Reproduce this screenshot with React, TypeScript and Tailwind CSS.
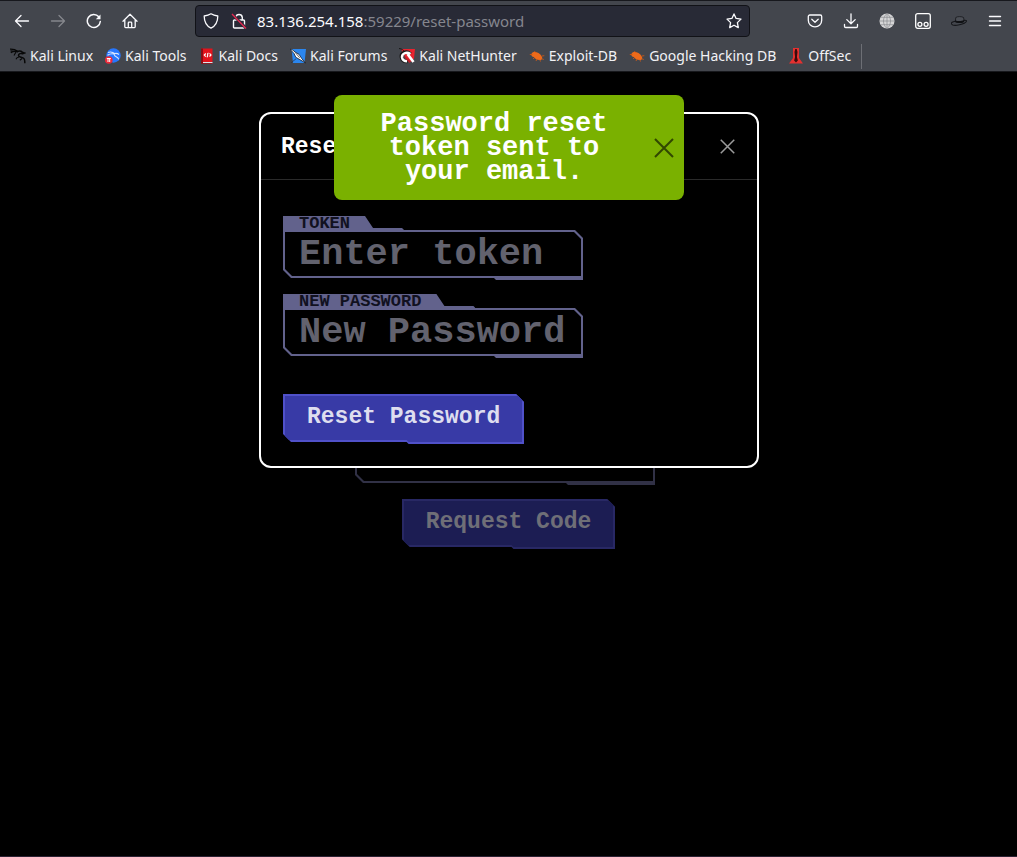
import type { ReactNode } from "react";

const Stroke = ({ children, size = 16, width = 1.3 }: { children: ReactNode; size?: number; width?: number }) => (
  <svg width={size} height={size} viewBox="0 0 16 16" fill="none" stroke="currentColor" strokeWidth={width} strokeLinecap="round" strokeLinejoin="round" aria-hidden="true">
    {children}
  </svg>
);

const ToolButton = ({ label, dim, children }: { label: string; dim?: boolean; children: ReactNode }) => (
  <button type="button" aria-label={label} className={`flex h-8 w-9 shrink-0 items-center justify-center ${dim ? "text-[#85878c]" : "text-[#fbfbfe]"}`}>
    {children}
  </button>
);

const Bug = () => (
  <svg width="16" height="16" viewBox="0 0 16 16" aria-hidden="true">
    <path d="M2.500 6C3 3.800 5.600 3.600 7.500 4.300c2.800.8 5 2.700 5.700 5.200.3 1.600-1 2.700-2.700 2.600-2.600-.2-4.800-1.400-5.700-3.100C3 8.800 2 7.800 2.500 6Z" fill="#ee6a1a" />
    <path d="M.8 6.500h3M4 11l2-2M7 13l1-2M5.500 3l1 2M13 8l2.300-.3M14.800 11.500l-2.300-.8M11.500 13.500l-.7-2" stroke="#d95c12" strokeWidth=".8" />
  </svg>
);

const bookmarks: { name: string; icon: ReactNode }[] = [
  {
    name: "Kali Linux",
    icon: (
      <svg width="16" height="16" viewBox="0 0 16 16" fill="none" stroke="#080808" aria-hidden="true">
        <path d="M0 1.200c3.500-.2 5.500.5 8 2.300M.8 4.800C3 3.200 5 3 8 3.800M.5 2.800 6 3.500" strokeWidth="1.200" />
        <path d="M7 3.500c2-.6 4.300-.4 5.300.6l2.400.9-2 .7c-2-.6-4.200-.1-4.200 1.700 0 2.200 4 1.300 5.500 3.200.9 1.200.9 2.900.8 4.600" strokeWidth="1.500" />
        <path d="M6 4 4 7.500M9 9c-1.500.2-2.500 1-3 2.200M12 10.500l-2.200 1.700" strokeWidth="1.100" />
      </svg>
    ),
  },
  {
    name: "Kali Tools",
    icon: (
      <svg width="16" height="16" viewBox="0 0 16 16" fill="none" aria-hidden="true">
        <circle cx="8.500" cy="7.500" r="7.200" fill="#2777ff" />
        <path d="M3 4.500c2.600-.9 5-.3 7 1.300M2.500 7.300c2.300-1.600 4.500-1.900 7-1.200M9 5.700c2-.7 3.500-.4 5 .8M9.500 6.300c-.8 2.700 3.500 2 4.200 5" stroke="#d9e7ff" strokeWidth="1.100" />
        <circle cx="3.800" cy="12" r="3.800" fill="#ed2939" />
        <path d="M1.800 10.500h4M3 10.500V14M4.700 10.500V14" stroke="#fff" strokeWidth="1" />
      </svg>
    ),
  },
  {
    name: "Kali Docs",
    icon: (
      <svg width="16" height="16" viewBox="0 0 16 16" fill="none" aria-hidden="true">
        <path d="M2 .5h11.500V14H2z" fill="#e3131c" />
        <path d="M2 .5h2V15H2z" fill="#8c0d14" />
        <path d="M4 14h9.500v1.300H4z" fill="#dfe3ea" />
        <path d="M2 15.200h11.500v.8H2z" fill="#8c0d14" />
        <path d="m6.800 5.500-1.500 1.600 1.500 1.600M10.500 5.300 12 6.900l-1.500 1.600M9.500 5C7.300 5.500 10 8.300 7.800 9.200" stroke="#fff" strokeWidth="1.200" />
      </svg>
    ),
  },
  {
    name: "Kali Forums",
    icon: (
      <svg width="16" height="16" viewBox="0 0 16 16" fill="none" aria-hidden="true">
        <path d="M1.500 1H16l-1.500 14H3z" fill="#2b86ee" />
        <path d="M0 1.200c2 .2 3.500 1.200 5 2.800l4 2.300 2.700 4.200L15.500 15l-5.300-3.200-4.400-2.500L4 5.500z" fill="#fff" stroke="#161b25" strokeWidth=".8" />
        <path d="m5.500 4.800 4.200 5M1 14.800l5-4" stroke="#26303f" strokeWidth=".7" />
      </svg>
    ),
  },
  {
    name: "Kali NetHunter",
    icon: (
      <svg width="16" height="16" viewBox="0 0 16 16" fill="none" aria-hidden="true">
        <path d="M2 1h14l-1 9.500L12 14 6 9z" fill="#e8232e" />
        <path d="M0 .5c2.500.2 4.500 1.500 6 3.500" stroke="#191919" strokeWidth="1" />
        <path d="M11.500 6C7 2 1.500 5 2.500 9.500c.6 2.800 3 4.200 6 4" stroke="#191919" strokeWidth="3.600" />
        <path d="M11.500 6C7.500 3.300 2.500 5.500 3 9.500c.5 2.600 2.500 3.700 5 3.700" stroke="#fff" strokeWidth="2.400" />
        <path d="m8.500 6 6 8" stroke="#fff" strokeWidth="2.600" />
        <path d="m6 9 5 5.500" stroke="#c51b25" strokeWidth="1.500" />
      </svg>
    ),
  },
  { name: "Exploit-DB", icon: <Bug /> },
  { name: "Google Hacking DB", icon: <Bug /> },
  {
    name: "OffSec",
    icon: (
      <svg width="16" height="16" viewBox="0 0 16 16" aria-hidden="true">
        <path d="M5 0h6v10l4 5.500H1L5 10z" fill="#e5302f" />
        <path d="M7.300 1h1.400l.8 3-.6 5 1 3.500-1.900 2-1.900-2 1-3.500-.6-5z" fill="#3a0b0c" />
      </svg>
    ),
  },
];

const BrowserBar = () => (
  <header className="border-t border-b border-t-[#17181d] border-b-[#17181c] bg-[#43464d] font-['Noto_Sans',sans-serif]">
    <div className="flex h-10 items-center px-1">
      <ToolButton label="Back">
        <Stroke><path d="M14.500 8H1.500M7 2.500 1.500 8 7 13.500" /></Stroke>
      </ToolButton>
      <ToolButton label="Forward" dim>
        <Stroke><path d="M1.500 8h13M9 2.500 14.500 8 9 13.500" /></Stroke>
      </ToolButton>
      <ToolButton label="Reload">
        <Stroke width={1.5}>
          <path d="M14.300 8.500A6.500 6.500 0 1 1 12.800 3.800" />
          <path d="M14.500 1.500v4.700H9.800z" fill="currentColor" stroke="none" />
        </Stroke>
      </ToolButton>
      <ToolButton label="Home">
        <Stroke>
          <path d="M1 8.200 8 1.300l7 6.900M2.800 7v6.800c0 .5.300.8.8.8h8.800c.5 0 .8-.3.8-.8V7M6.300 14.500V10c0-.5.300-.8.8-.8h1.800c.5 0 .8.3.8.800v4.500" />
        </Stroke>
      </ToolButton>

      <div className="mx-[47px] flex h-8 min-w-0 flex-1 items-center rounded border border-[#111217] bg-[#282a36] text-[#fbfbfe]">
        <span className="ml-[7px] shrink-0">
          <Stroke><path d="M8 .8c2 1.300 4.200 1.900 6.800 2.200 0 5.500-1.800 9.700-6.800 12.200C3 12.700 1.200 8.500 1.200 3 3.800 2.700 6 2.100 8 .8Z" /></Stroke>
        </span>
        <span className="ml-3 shrink-0">
          <svg width="16" height="16" viewBox="0 0 16 16" fill="none" strokeWidth="1.400" aria-hidden="true">
            <path d="M4.800 7V4.300a3.300 3.300 0 0 1 6.500 0V7M3.500 7h9c.6 0 1 .4 1 1v6c0 .6-.4 1-1 1h-9c-.6 0-1-.4-1-1V8c0-.6.4-1 1-1Z" stroke="#fbfbfe" />
            <path d="m1.500 1.500 13.500 13.500" stroke="#282a36" strokeWidth="3" />
            <path d="m1 1 14 14.500" stroke="#e22850" />
          </svg>
        </span>
        <p className="ml-2.5 min-w-0 flex-1 truncate text-[15px] leading-5 text-[#85868e]">
          <span className="text-[#fbfbfe]">83.136.254.158</span>:59229/reset-password
        </p>
        <button type="button" aria-label="Bookmark this page" className="mr-[7px] shrink-0">
          <Stroke>
            <path d="m8 .9 2.100 4.500 4.900.7-3.600 3.500.9 5-4.300-2.400-4.300 2.400.9-5L1 6.100l4.900-.7z" />
          </Stroke>
        </button>
      </div>

      <ToolButton label="Save to Pocket">
        <Stroke><path d="M2.800 2h10.400c.8 0 1.500.6 1.500 1.400v3.800c0 3.800-3 6.600-6.700 6.600S1.300 11 1.300 7.200V3.400C1.300 2.600 2 2 2.800 2ZM4.800 6.200 8 9.200l3.200-3" /></Stroke>
      </ToolButton>
      <ToolButton label="Downloads">
        <Stroke><path d="M8 .8v9.800M3.800 6.600 8 10.700l4.200-4.100M1.500 11.500v1.800c0 .7.500 1.200 1.200 1.200h10.600c.7 0 1.200-.5 1.200-1.200v-1.800" /></Stroke>
      </ToolButton>
      <ToolButton label="Proxy">
        <svg width="16" height="16" viewBox="0 0 16 16" fill="none" aria-hidden="true">
          <circle cx="8" cy="8" r="7.500" fill="#d5d5d6" />
          <path d="M8 .5v15M.5 8h15M1.800 4.300h12.400M1.800 11.700h12.400M8 .5C3.300 4.500 3.300 11.500 8 15.500M8 .5c4.700 4 4.700 11 0 15" stroke="#8b8d91" strokeWidth=".7" />
        </svg>
      </ToolButton>
      <ToolButton label="Containers">
        <svg width="16" height="16" viewBox="0 0 16 16" fill="none" stroke="#fff" strokeWidth="1.300" aria-hidden="true">
          <rect x=".7" y=".7" width="14.600" height="14.600" rx="2" />
          <circle cx="4.900" cy="11.300" r="2" />
          <circle cx="11.100" cy="11.300" r="2" />
        </svg>
      </ToolButton>
      <ToolButton label="Hat">
        <svg width="16" height="16" viewBox="0 0 16 16" fill="none" aria-hidden="true">
          <path d="M4.300 8.500 4.800 4.500c1.500-1.200 6-1.200 7.800 0l.5 3.500c-2 1.700-6.500 2-8.800.5Z" fill="#4c4f56" stroke="#15161a" strokeWidth=".8" />
          <path d="M4.300 7.200c2.200 1.300 6.500 1 8.800-.3v2c-2.300 1.500-6.800 1.600-9 .2z" fill="#101114" />
          <path d="M4.200 8.200C1.500 8.700 0 9.700.5 10.900c.8 1.400 4.500 1.700 8 .8 3.500-.8 6.500-2.300 7-3.500.3-.8-1-1-2.500-.8" stroke="#15161a" strokeWidth="1.100" />
        </svg>
      </ToolButton>
      <ToolButton label="Open menu">
        <Stroke width={1.4}><path d="M2.500 3.500h11M2.500 8h11M2.500 12.500h11" /></Stroke>
      </ToolButton>
    </div>
    <nav aria-label="Bookmarks" className="flex h-[30px] items-center gap-3 overflow-hidden pl-2.5">
      {bookmarks.map((b) => (
        <a key={b.name} href="#" className="flex shrink-0 items-center gap-1 text-sm text-[#f2f2f5]">
          {b.icon}
          {b.name}
        </a>
      ))}
      <span className="-ml-0.5 h-[25px] w-px shrink-0 bg-[#6d6f75]" />
    </nav>
  </header>
);

const inputClass =
  "block h-11 w-full min-w-0 bg-black px-3.5 text-[37px] leading-[44px] font-bold text-[#d8d8e4] outline-none placeholder:text-[#62626e] placeholder:opacity-100 [clip-path:polygon(0_0,calc(100%-7px)_0,100%_7px,100%_100%,7px_100%,0_calc(100%-7px))]";
const frameClass =
  "bg-[#62628c] px-0.5 pt-0.5 pb-1 [clip-path:polygon(0_0,calc(100%-8px)_0,100%_8px,100%_100%,calc(100%-87px)_100%,calc(100%-89px)_calc(100%-2px),8px_calc(100%-2px),0_calc(100%-10px))]";

const Field = ({ id, label, placeholder, type }: { id: string; label: string; placeholder: string; type: string }) => (
  <div className="flex w-[300px] max-w-full flex-col">
    <label
      htmlFor={id}
      className="h-3.5 self-start bg-[#62628c] pr-[54px] pl-4 text-[17px] leading-4 font-bold text-[#11111f] uppercase [clip-path:polygon(0_0,calc(100%-39px)_0,calc(100%-31px)_12px,calc(100%-2px)_12px,100%_100%,0_100%)]"
    >
      {label}
    </label>
    <div className={frameClass}>
      <input id={id} type={type} placeholder={placeholder} className={inputClass} />
    </div>
  </div>
);

const CutButton = ({ children }: { children: ReactNode }) => (
  <button
    type="submit"
    className="block bg-[#5051c9] p-0.5 [clip-path:polygon(0_0,calc(100%-8px)_0,100%_8px,100%_100%,calc(50%+5px)_100%,calc(50%+3px)_calc(100%-2px),8px_calc(100%-2px),0_calc(100%-10px))]"
  >
    <span className="block h-[46px] bg-[#383aa6] px-[22px] text-[23px] leading-[42px] font-bold text-[#dedeef] [clip-path:polygon(0_0,100%_0,100%_100%,calc(50%+5px)_100%,calc(50%+3px)_calc(100%-2px),0_calc(100%-2px))]">
      {children}
    </span>
  </button>
);

const Cross = ({ size }: { size: number }) => (
  <svg width={size} height={size} viewBox="0 0 20 20" fill="none" stroke="currentColor" strokeWidth="2" aria-hidden="true">
    <path d="m1 1 18 18M19 1 1 19" />
  </svg>
);

export default function App() {
  return (
    <div className="flex min-h-screen flex-col border-b border-[#2b2233] bg-black">
      <BrowserBar />
      <main className="relative flex flex-1 flex-col font-['Liberation_Mono',monospace]">
        <form className="flex flex-col items-center gap-3.5 pt-[363px]" onSubmit={(e) => e.preventDefault()}>
          <div className="w-[307px] max-w-full pr-[7px]">
            <div className={frameClass}>
              <input type="text" aria-label="Account" className={inputClass} />
            </div>
          </div>
          <CutButton>Request Code</CutButton>
        </form>

        <div className="absolute inset-0 flex items-start justify-center bg-black/50 pt-10 pl-px">
          <section role="dialog" aria-modal="true" aria-labelledby="reset-title" className="w-[500px] max-w-full rounded-xl border-2 border-white bg-black">
            <div className="flex h-[66px] items-center justify-between border-b border-[#2a2a2a] pr-[22px] pl-5">
              <h2 id="reset-title" className="text-[23px] leading-6 font-bold text-white">
                Reset Password
              </h2>
              <button type="button" aria-label="Close" className="text-[#9b9b9b]">
                <Cross size={15} />
              </button>
            </div>
            <form className="flex flex-col items-start gap-9 px-[22px] pt-9 pb-[22px]" onSubmit={(e) => e.preventDefault()}>
              <div className="flex max-w-full flex-col gap-3.5">
                <Field id="token" label="Token" placeholder="Enter token" type="text" />
                <Field id="new-password" label="New Password" placeholder="New Password" type="password" />
              </div>
              <CutButton>Reset Password</CutButton>
            </form>
          </section>
        </div>

        <div className="absolute inset-x-0 top-[23px] flex justify-center pl-px">
          <div role="status" className="flex w-[350px] max-w-full items-center gap-4 rounded-lg bg-[#7ab100] pt-[17px] pr-2.5 pb-4 pl-4">
            <p className="flex-1 text-center text-[27px] leading-6 font-bold text-white">Password reset token sent to your email.</p>
            <button type="button" aria-label="Dismiss" className="text-[#314700]">
              <Cross size={20} />
            </button>
          </div>
        </div>
      </main>
    </div>
  );
}
